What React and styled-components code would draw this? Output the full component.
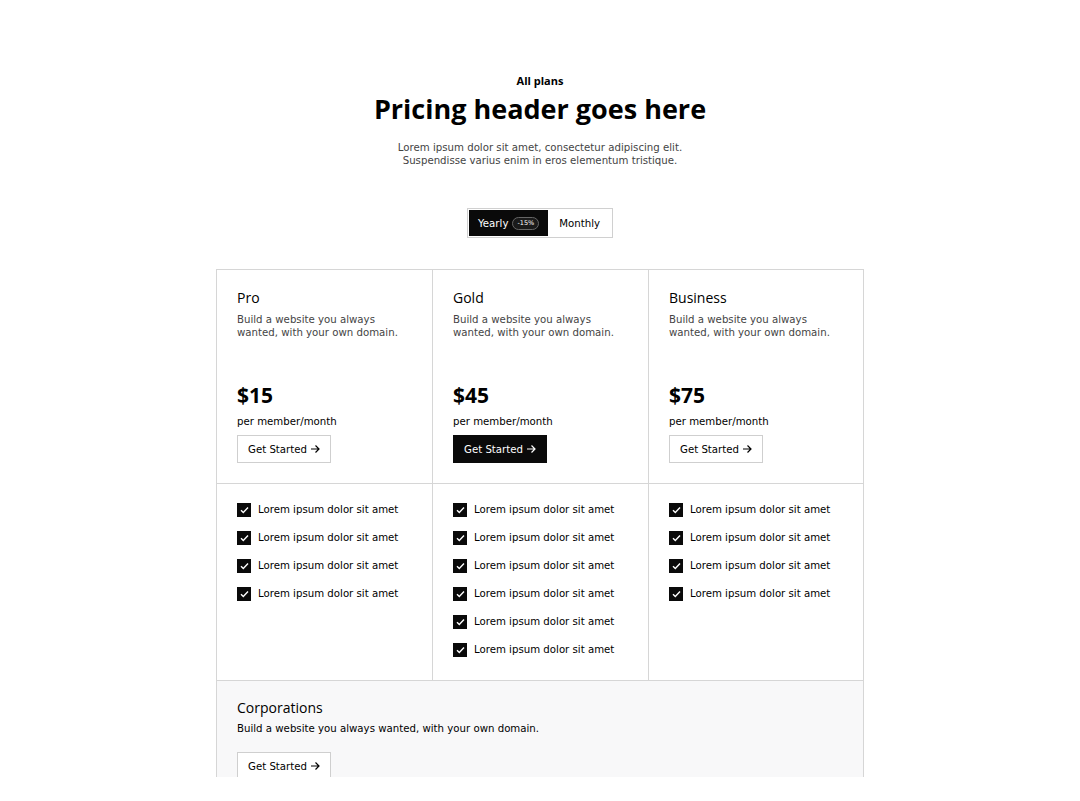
import React from "react";
import styled, { createGlobalStyle } from "styled-components";

const GlobalStyle = createGlobalStyle`
    body {
        margin: 0;
        background: #fff;
        font-family: "DejaVu Sans", "Liberation Sans", sans-serif;
        color: #000;
    }
`;

const Page = styled.div`
    width: 1080px;
    height: 801px;
    padding-top: 74px;
    box-sizing: border-box;
    display: flex;
    flex-direction: column;
    align-items: center;
`;

const Eyebrow = styled.div`
    font-family: "Open Sans", sans-serif;
    font-size: 11px;
    font-weight: bold;
    line-height: 14px;
`;

const Title = styled.h1`
    margin: 4px 0 0;
    font-family: "Open Sans", sans-serif;
    font-size: 27px;
    font-weight: bold;
    line-height: 34px;
`;

const Lead = styled.p`
    margin: 15px 0 0;
    font-size: 10.2px;
    line-height: 13px;
    color: #444;
    text-align: center;
`;

const Toggle = styled.div`
    margin-top: 41px;
    display: flex;
    padding: 1px;
    border: 1px solid #d0d0d0;
`;

const ToggleButton = styled.div`
    height: 26px;
    padding: 0 ${(p) => (p.active ? "9px" : "11px")};
    display: flex;
    align-items: center;
    gap: 4px;
    font-size: 10.2px;
    background: ${(p) => (p.active ? "#0a0a0a" : "#fff")};
    color: ${(p) => (p.active ? "#fff" : "#000")};
`;

const Badge = styled.span`
    font-size: 6.5px;
    line-height: 9px;
    padding: 1px 4px;
    border: 1px solid #666;
    border-radius: 8px;
    background: #1a1a1a;
`;

const Table = styled.div`
    margin-top: 31px;
    width: 648px;
    height: 508px;
    overflow: hidden;
    border: 1px solid #d6d6d6;
    border-bottom: none;
    box-sizing: border-box;
`;

const Grid = styled.div`
    display: grid;
    grid-template-columns: 215px 216px 1fr;
`;

const Cell = styled.div`
    padding: 19px 20px 20px;
    border-left: ${(p) => (p.first ? "none" : "1px solid #d6d6d6")};
    border-bottom: 1px solid #d6d6d6;
    box-sizing: border-box;
    height: ${(p) => (p.top ? "214px" : "197px")};
    display: flex;
    flex-direction: column;
`;

const PlanName = styled.div`
    font-family: "Open Sans", sans-serif;
    font-size: 14px;
    line-height: 18px;
`;

const PlanDesc = styled.div`
    margin-top: 6px;
    font-size: 10.2px;
    line-height: 13px;
    color: #444;
`;

const Price = styled.div`
    margin-top: auto;
    font-family: "Open Sans", sans-serif;
    font-size: 21px;
    font-weight: bold;
    line-height: 26px;
`;

const Per = styled.div`
    margin-top: 7px;
    font-size: 10.2px;
    line-height: 13px;
`;

const Button = styled.button`
    margin-top: 7px;
    align-self: flex-start;
    height: 28px;
    padding: 0 10px;
    display: flex;
    align-items: center;
    gap: 3px;
    font-family: inherit;
    font-size: 10.2px;
    border: 1px solid ${(p) => (p.dark ? "#0a0a0a" : "#cfcfcf")};
    background: ${(p) => (p.dark ? "#0a0a0a" : "#fff")};
    color: ${(p) => (p.dark ? "#fff" : "#000")};
`;

const List = styled.ul`
    list-style: none;
    margin: 0;
    padding: 0;
    display: flex;
    flex-direction: column;
    gap: 14px;
`;

const Item = styled.li`
    display: flex;
    align-items: center;
    gap: 7px;
    font-size: 10.2px;
    line-height: 14px;
    white-space: nowrap;
`;

const Check = styled.span`
    flex: none;
    width: 14px;
    height: 14px;
    background: #0a0a0a;
    display: flex;
    align-items: center;
    justify-content: center;
`;

const Corp = styled.div`
    background: #f8f8f9;
    padding: 18px 20px 0;
`;

const CorpDesc = styled.div`
    margin-top: 5px;
    font-size: 10.2px;
    line-height: 13px;
`;

const CorpButton = styled(Button)`
    margin-top: 17px;
`;

const Arrow = ({ color = "currentColor" }) => (
    <svg width="10" height="10" viewBox="0 0 10 10" fill="none">
        <path d="M1 5h8M5.5 1.5L9 5l-3.5 3.5" stroke={color} strokeWidth="1.2" />
    </svg>
);

const CheckMark = () => (
    <svg width="9" height="8" viewBox="0 0 9 8" fill="none">
        <path d="M1 4.2l2.3 2.3L8 1.5" stroke="#fff" strokeWidth="1.4" />
    </svg>
);

const plans = [
    { name: "Pro", price: "$15", items: 4 },
    { name: "Gold", price: "$45", items: 6, dark: true },
    { name: "Business", price: "$75", items: 4 },
];

function App() {
    return (
        <Page>
            <GlobalStyle />
            <Eyebrow>All plans</Eyebrow>
            <Title>Pricing header goes here</Title>
            <Lead>
                Lorem ipsum dolor sit amet, consectetur adipiscing elit.
                <br />
                Suspendisse varius enim in eros elementum tristique.
            </Lead>
            <Toggle>
                <ToggleButton active>
                    Yearly <Badge>-15%</Badge>
                </ToggleButton>
                <ToggleButton>Monthly</ToggleButton>
            </Toggle>
            <Table>
                <Grid>
                    {plans.map((p, i) => (
                        <Cell top first={i === 0} key={p.name}>
                            <PlanName>{p.name}</PlanName>
                            <PlanDesc>
                                Build a website you always
                                <br />
                                wanted, with your own domain.
                            </PlanDesc>
                            <Price>{p.price}</Price>
                            <Per>per member/month</Per>
                            <Button dark={p.dark}>
                                Get Started <Arrow />
                            </Button>
                        </Cell>
                    ))}
                    {plans.map((p, i) => (
                        <Cell first={i === 0} key={p.name + "-list"}>
                            <List>
                                {Array.from({ length: p.items }).map((_, j) => (
                                    <Item key={j}>
                                        <Check>
                                            <CheckMark />
                                        </Check>
                                        Lorem ipsum dolor sit amet
                                    </Item>
                                ))}
                            </List>
                        </Cell>
                    ))}
                </Grid>
                <Corp>
                    <PlanName>Corporations</PlanName>
                    <CorpDesc>Build a website you always wanted, with your own domain.</CorpDesc>
                    <CorpButton>
                        Get Started <Arrow />
                    </CorpButton>
                </Corp>
            </Table>
        </Page>
    );
}

export default App;
